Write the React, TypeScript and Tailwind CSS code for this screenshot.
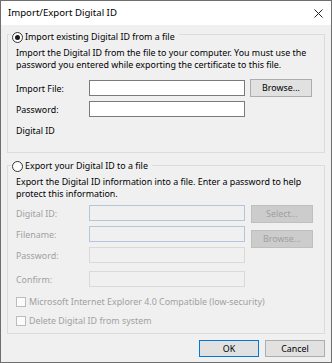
import React from "react";

function Radio({ checked }: { checked?: boolean }) {
  return (
    <span className="flex h-[11px] w-[11px] shrink-0 items-center justify-center rounded-full border border-[#333333] bg-white">
      {checked && <span className="h-[5px] w-[5px] rounded-full bg-[#1a1a1a]" />}
    </span>
  );
}

function Check({ label }: { label: string }) {
  return (
    <div className="flex h-[13px] items-center">
      <span className="h-[10px] w-[10px] shrink-0 border border-[#bcbcbc] bg-[#fbfbfb]" />
      <span className="ml-[3px] text-[#a0a0a0]">{label}</span>
    </div>
  );
}

export default function App() {
  return (
    <div
      className="flex h-[363px] w-[332px] flex-col border border-[#6e6e6e] bg-[#f0f0f0] text-[8.9px] leading-[12px] text-black"
      style={{ fontFamily: '"Noto Sans", "Open Sans", sans-serif' }}
    >
      {/* Title bar */}
      <div className="flex h-[24px] shrink-0 items-center justify-between bg-white pl-[7px] pr-[8px]">
        <span className="text-[9.6px] text-black">Import/Export Digital ID</span>
        <svg width="9" height="9" viewBox="0 0 9 9" className="mt-[1px]">
          <path d="M0.5 0.5 L8.5 8.5 M8.5 0.5 L0.5 8.5" stroke="#222" strokeWidth="1" fill="none" />
        </svg>
      </div>

      {/* Body */}
      <div className="flex flex-1 flex-col px-[6px]">
        {/* Group 1 */}
        <div className="mt-[9px] flex flex-col border border-[#dcdcdc] pb-[15px] pl-[8px]">
          <div className="-ml-[5px] -mt-[4px] flex h-[12px] w-fit items-center bg-[#f0f0f0] pl-[1px] pr-[4px]">
            <Radio checked />
            <span className="ml-[2px]">Import existing Digital ID from a file</span>
          </div>
          <div className="mt-[4px]">
            Import the Digital ID from the file to your computer. You must use the
            <br />
            password you entered while exporting the certificate to this file.
          </div>
          <div className="mt-[9px] flex h-[16px] items-center">
            <span className="mt-[1px] w-[73px] shrink-0">Import File:</span>
            <div className="h-[16px] w-[156px] border border-[#7a7a7a] bg-white" />
            <button className="ml-[5px] flex h-[18px] w-[62px] items-center justify-center border border-[#adadad] bg-[#e1e1e1]">
              Browse...
            </button>
          </div>
          <div className="mt-[5px] flex h-[16px] items-center">
            <span className="mt-[1px] w-[73px] shrink-0">Password:</span>
            <div className="h-[16px] w-[156px] border border-[#7a7a7a] bg-white" />
          </div>
          <div className="mt-[8px]">Digital ID</div>
        </div>

        {/* Group 2 */}
        <div className="mt-[12px] flex flex-col border border-[#dcdcdc] pb-[6px] pl-[8px]">
          <div className="-ml-[5px] -mt-[6px] flex h-[12px] w-fit items-center bg-[#f0f0f0] pl-[1px] pr-[4px]">
            <Radio />
            <span className="ml-[2px]">Export your Digital ID to a file</span>
          </div>
          <div className="mt-[4px]">
            Export the Digital ID information into a file. Enter a password to help
            <br />
            protect this information.
          </div>
          <div className="mt-[5px] flex h-[16px] items-start">
            <span className="mt-[3px] w-[73px] shrink-0 text-[#a0a0a0]">Digital ID:</span>
            <div className="h-[16px] w-[156px] border border-[#b4c6dc] bg-[#f0f0f0]" />
            <button className="ml-[6px] flex h-[18px] w-[62px] shrink-0 items-center justify-center border border-[#bfbfbf] bg-[#cccccc] text-[#a0a0a0]">
              Select...
            </button>
          </div>
          <div className="mt-[5px] flex h-[16px] items-start">
            <span className="mt-[3px] w-[73px] shrink-0 text-[#a0a0a0]">Filename:</span>
            <div className="h-[16px] w-[156px] border border-[#b4c6dc] bg-[#f0f0f0]" />
            <button className="ml-[6px] mt-[4px] flex h-[18px] w-[62px] shrink-0 items-center justify-center border border-[#bfbfbf] bg-[#cccccc] text-[#a0a0a0]">
              Browse...
            </button>
          </div>
          <div className="mt-[5px] flex h-[16px] items-start">
            <span className="mt-[3px] w-[73px] shrink-0 text-[#a0a0a0]">Password:</span>
            <div className="h-[16px] w-[156px] border border-[#d9d9d9] bg-[#f0f0f0]" />
          </div>
          <div className="mt-[8px] flex h-[16px] items-start">
            <span className="mt-[3px] w-[73px] shrink-0 text-[#a0a0a0]">Confirm:</span>
            <div className="h-[16px] w-[156px] border border-[#d9d9d9] bg-[#f0f0f0]" />
          </div>
          <div className="mt-[8px]">
            <Check label="Microsoft Internet Explorer 4.0 Compatible (low-security)" />
          </div>
          <div className="mt-[6px]">
            <Check label="Delete Digital ID from system" />
          </div>
        </div>

        {/* Buttons */}
        <div className="mt-[6px] flex justify-end gap-[6px]">
          <button className="flex h-[17px] w-[60px] items-center justify-center border border-[#0078d7] bg-[#e1e1e1]">
            OK
          </button>
          <button className="flex h-[17px] w-[60px] items-center justify-center border border-[#adadad] bg-[#e1e1e1]">
            Cancel
          </button>
        </div>
      </div>
    </div>
  );
}
